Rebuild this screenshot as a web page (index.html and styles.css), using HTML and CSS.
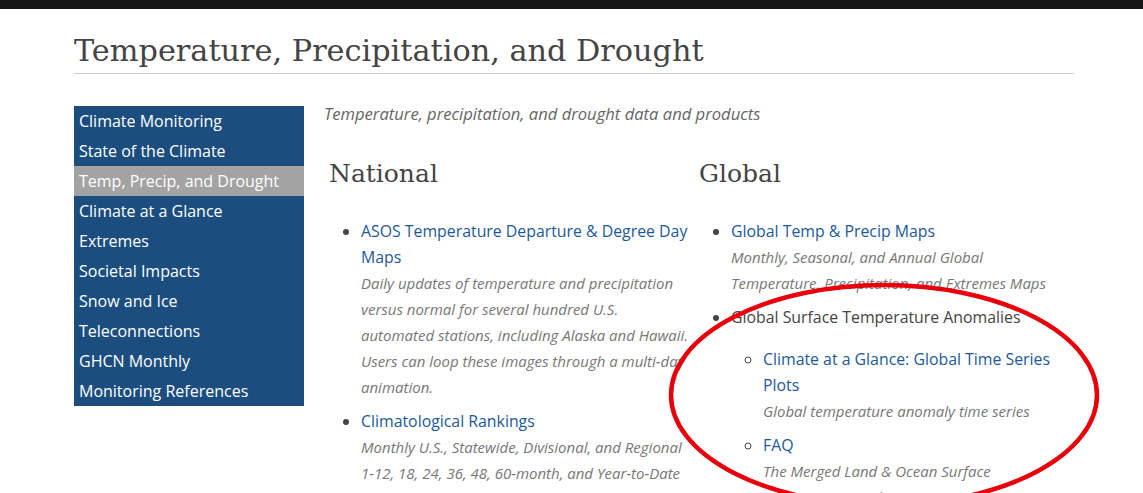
FILE: index.html
```html
<!DOCTYPE html>
<html lang="en">
<head>
<meta charset="utf-8">
<title>Temperature, Precipitation, and Drought</title>
<link rel="stylesheet" href="styles.css">
</head>
<body>
<div class="topbar"></div>
<div class="page">
  <h1 class="title">Temperature, Precipitation, and Drought</h1>
  <div class="main">
    <nav class="sidenav">
      <a class="navitem" href="#">Climate Monitoring</a>
      <a class="navitem" href="#">State of the Climate</a>
      <a class="navitem active" href="#">Temp, Precip, and Drought</a>
      <a class="navitem" href="#">Climate at a Glance</a>
      <a class="navitem" href="#">Extremes</a>
      <a class="navitem" href="#">Societal Impacts</a>
      <a class="navitem" href="#">Snow and Ice</a>
      <a class="navitem" href="#">Teleconnections</a>
      <a class="navitem" href="#">GHCN Monthly</a>
      <a class="navitem" href="#">Monitoring References</a>
    </nav>
    <div class="content">
      <p class="intro">Temperature, precipitation, and drought data and products</p>
      <div class="columns">
        <section class="col">
          <h2 class="colhead">National</h2>
          <ul class="list">
            <li><a href="#">ASOS Temperature Departure &amp; Degree Day Maps</a>
              <p class="desc">Daily updates of temperature and precipitation versus normal for several hundred U.S. automated stations, including Alaska and Hawaii. Users can loop these images through a multi-day animation.</p></li>
            <li><a href="#">Climatological Rankings</a>
              <p class="desc">Monthly U.S., Statewide, Divisional, and Regional 1-12, 18, 24, 36, 48, 60-month, and Year-to-Date</p></li>
          </ul>
        </section>
        <section class="col">
          <h2 class="colhead">Global</h2>
          <ul class="list">
            <li><a href="#">Global Temp &amp; Precip Maps</a>
              <p class="desc">Monthly, Seasonal, and Annual Global Temperature, Precipitation, and Extremes Maps</p></li>
            <li><span class="plain">Global Surface Temperature Anomalies</span>
              <ul class="sublist">
                <li><a href="#">Climate at a Glance: Global Time Series Plots</a>
                  <p class="desc">Global temperature anomaly time series</p></li>
                <li><a href="#">FAQ</a>
                  <p class="desc">The Merged Land &amp; Ocean Surface Temperature Analysis</p></li>
              </ul>
            </li>
          </ul>
        </section>
      </div>
    </div>
  </div>
</div>
<svg class="annotation" width="1143" height="493" viewBox="0 0 1143 493" aria-hidden="true">
  <ellipse cx="884" cy="395" rx="213" ry="110" fill="none" stroke="#e8000b" stroke-width="4.5"/>
</svg>
</body>
</html>
```
FILE: styles.css
```css
html, body {
  margin: 0;
  padding: 0;
  background: #fff;
  overflow: hidden;
}
body {
  font-family: "Open Sans", "Liberation Sans", sans-serif;
  color: #444;
  position: relative;
  width: 1143px;
  height: 493px;
}
.topbar {
  height: 9px;
  background: #161616;
}
.page {
  width: 1000px;
  margin-left: 74px;
}
.title {
  font-family: "DejaVu Serif", "Liberation Serif", serif;
  font-weight: normal;
  font-size: 30.3px;
  line-height: 40px;
  color: #444;
  margin: 22px 0 0 0;
  padding-bottom: 2px;
  border-bottom: 1px solid #cfcfcf;
}
.main {
  display: flex;
  margin-top: 32px;
}
.sidenav {
  width: 230px;
  flex: none;
  background: #1b4e7f;
  display: flex;
  flex-direction: column;
  align-self: flex-start;
}
.navitem {
  display: block;
  height: 30px;
  line-height: 30px;
  padding-left: 5px;
  color: #fff;
  font-size: 16px;
  text-decoration: none;
}
.navitem.active {
  background: #a3a3a3;
}
.content {
  margin-left: 20px;
  flex: 1;
}
.intro {
  margin: 0;
  font-style: italic;
  font-size: 16.6px;
  line-height: 16px;
  color: #666;
}
.columns {
  display: flex;
  padding-left: 5px;
  margin-top: 36px;
}
.col {
  width: 360px;
  padding-right: 10px;
  flex: none;
}
.colhead {
  font-family: "DejaVu Serif", "Liberation Serif", serif;
  font-weight: normal;
  font-size: 25px;
  line-height: 32px;
  color: #444;
  margin: 0;
}
.list {
  margin: 28px 0 0 0;
  padding-left: 32px;
  list-style: disc;
  color: #444;
}
.list li {
  font-size: 15.85px;
  line-height: 26px;
  margin-bottom: 8px;
}
.list a {
  color: #20599a;
  text-decoration: none;
}
.plain {
  color: #444;
}
.desc {
  margin: 0;
  font-style: italic;
  font-size: 15px;
  line-height: 26px;
  color: #777;
}
.sublist {
  margin: 16px 0 0 0;
  padding-left: 32px;
  list-style: circle;
}
.annotation {
  position: absolute;
  left: 0;
  top: 0;
  pointer-events: none;
}
```
